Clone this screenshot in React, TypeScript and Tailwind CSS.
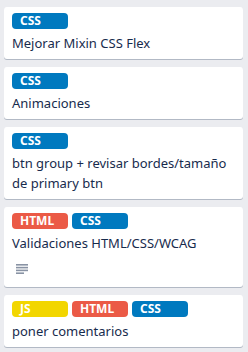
const labelColors: Record<string, string> = {
    CSS: 'bg-[#0079bf]',
    HTML: 'bg-[#eb5a46]',
    JS: 'bg-[#f2d600]',
}

type Card = {
    id: number
    labels: string[]
    title: string
    hasDescription?: boolean
}

const cards: Card[] = [
    { id: 1, labels: ['CSS'], title: 'Mejorar Mixin CSS Flex' },
    { id: 2, labels: ['CSS'], title: 'Animaciones' },
    {
        id: 3,
        labels: ['CSS'],
        title: 'btn group + revisar bordes/tamaño de primary btn',
    },
    {
        id: 4,
        labels: ['HTML', 'CSS'],
        title: 'Validaciones HTML/CSS/WCAG',
        hasDescription: true,
    },
    { id: 5, labels: ['JS', 'HTML', 'CSS'], title: 'poner comentarios' },
]

const DescriptionIcon = () => (
    <svg width="12" height="10" viewBox="0 0 12 10" fill="#8993a4">
        <rect x="0" y="0" width="12" height="1.6" />
        <rect x="0" y="2.8" width="12" height="1.6" />
        <rect x="0" y="5.6" width="12" height="1.6" />
        <rect x="0" y="8.4" width="8" height="1.6" />
    </svg>
)

const App = () => {
    return (
        <div
            className="w-[248px] h-[352px] bg-[#ebecf0] pt-[7px] px-1 flex flex-col gap-2"
            style={{ fontFamily: '"Noto Sans", "Open Sans", sans-serif' }}
        >
            {cards.map(card => (
                <div
                    key={card.id}
                    className="w-[239px] bg-white rounded-[3px] shadow-[0_1px_0_rgba(9,30,66,0.25)] pt-[6px] px-2 pb-[2px]"
                >
                    <div className="flex gap-1 mb-1">
                        {card.labels.map(label => (
                            <span
                                key={label}
                                className={`${labelColors[label]} min-w-[56px] h-4 px-2 rounded-[4px] text-white text-[12px] font-bold leading-4`}
                            >
                                {label}
                            </span>
                        ))}
                    </div>
                    <p className="text-[13px] leading-5 text-[#172b4d] mb-1">
                        {card.title}
                    </p>
                    {card.hasDescription && (
                        <div className="pl-1 pt-[7px] pb-[11px]">
                            <DescriptionIcon />
                        </div>
                    )}
                </div>
            ))}
        </div>
    )
}

export default App
